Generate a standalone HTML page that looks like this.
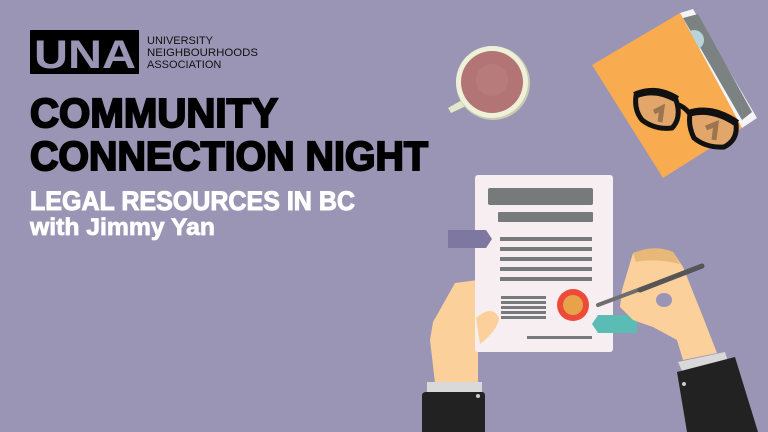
<!DOCTYPE html>
<html><head><meta charset="utf-8"><style>
html,body{margin:0;padding:0;width:768px;height:432px;overflow:hidden;background:#9a95b5}
svg{display:block}
</style></head><body>
<svg width="768" height="432" viewBox="0 0 768 432" xmlns="http://www.w3.org/2000/svg">
<rect width="768" height="432" fill="#9a95b5"/>
<rect x="30" y="30" width="109" height="44" fill="#000"/>
<text x="34" y="68" font-family="Liberation Sans, sans-serif" font-weight="bold" font-size="40" fill="#9a95b5" textLength="102" lengthAdjust="spacingAndGlyphs">UNA</text>
<g font-family="Liberation Sans, sans-serif" font-size="11" fill="#111">
<text x="147" y="44">UNIVERSITY</text>
<text x="147" y="56" textLength="111" lengthAdjust="spacingAndGlyphs">NEIGHBOURHOODS</text>
<text x="147" y="68">ASSOCIATION</text>
</g>
<g font-family="Liberation Sans, sans-serif" font-weight="bold">
<text x="30" y="127" font-size="41" fill="#000" textLength="248" lengthAdjust="spacingAndGlyphs" stroke="#000" stroke-width="2">COMMUNITY</text>
<text x="30" y="170" font-size="41" fill="#000" textLength="398" lengthAdjust="spacingAndGlyphs" stroke="#000" stroke-width="2">CONNECTION NIGHT</text>
<text x="30" y="210" font-size="27" fill="#fff" textLength="325" lengthAdjust="spacingAndGlyphs" stroke="#fff" stroke-width="1">LEGAL RESOURCES IN BC</text>
<text x="30" y="235" font-size="24" fill="#fff" textLength="185" lengthAdjust="spacingAndGlyphs" stroke="#fff" stroke-width="0.8">with Jimmy Yan</text>
</g>
<path d="M462,100 L448,108 L451,113 L466,106 Z" fill="#e3e8c8"/>
<circle cx="493" cy="83" r="37" fill="#c9ccb0"/>
<circle cx="492" cy="82" r="36" fill="#eef0d8"/>
<circle cx="492" cy="82" r="31" fill="#b27474"/>
<circle cx="492" cy="80" r="16" fill="#bd8080" opacity="0.6"/>
<polygon points="680,13 693,9 757,118 742,128" fill="#f4f4f4"/>
<polygon points="683,18 698,14 752,112 742,120" fill="#7c8282"/>
<circle cx="694" cy="40" r="10" fill="#b9d3db"/>
<polygon points="592,65 680,13 742,128 663,178" fill="#f9ab4f"/>
<g>
<path d="M636,96 Q655,88 676,100 Q682,118 672,128 Q655,130 642,120 Q634,110 636,96 Z" fill="#e3a66a" stroke="#111" stroke-width="5"/>
<path d="M690,114 Q712,108 736,124 Q738,140 724,147 Q706,148 694,138 Q688,126 690,114 Z" fill="#e3a66a" stroke="#111" stroke-width="5"/>
<path d="M676,104 Q684,106 690,114" stroke="#111" stroke-width="5" fill="none"/>
<path d="M634,94 Q656,84 678,98 M688,112 Q712,104 738,122" stroke="#111" stroke-width="4" fill="none"/>
<path d="M654,112 L662,108 L660,122" stroke="#9b7550" stroke-width="5" fill="none"/>
<path d="M706,128 L716,124 L714,140" stroke="#9b7550" stroke-width="5" fill="none"/>
</g>
<polygon points="433,322 455,283 478,280 478,383 435,383 430,340" fill="#fcd09a"/>
<rect x="475" y="175" width="138" height="177" rx="3" fill="#f6eef0"/>
<g fill="#767a7a">
<rect x="488" y="188" width="105" height="17" rx="2"/>
<rect x="498" y="212" width="95" height="10" rx="1"/>
<rect x="500" y="237" width="92" height="4"/>
<rect x="500" y="247" width="92" height="4"/>
<rect x="500" y="257" width="92" height="4"/>
<rect x="500" y="267" width="92" height="4"/>
<rect x="500" y="277" width="92" height="4"/>
<rect x="501" y="296" width="45" height="3"/>
<rect x="501" y="301" width="45" height="3"/>
<rect x="501" y="306" width="45" height="3"/>
<rect x="501" y="311" width="45" height="3"/>
<rect x="501" y="316" width="45" height="3"/>
<rect x="527" y="336" width="65" height="3"/>
</g>
<circle cx="573" cy="305" r="16" fill="#ee4a3a"/>
<circle cx="573" cy="305" r="10" fill="#e8a24a"/>
<polygon points="448,230 486,230 492,239 486,248 448,248" fill="#7e78a0"/>
<polygon points="598,315 637,315 637,333 598,333 592,324" fill="#5bbcb5"/>
<path d="M476,318 Q492,304 499,318 Q498,330 480,344 Z" fill="#fcd09a"/>
<rect x="427" y="382" width="55" height="10" fill="#d9d9d9"/>
<path d="M422,396 Q422,392 426,392 L482,392 Q485,392 485,396 L485,432 L422,432 Z" fill="#222"/>
<circle cx="478" cy="396" r="2" fill="#ccc"/>
<polygon points="633,253 673,252 683,267 703,317 717,353 683,360 677,340 653,327 633,320 620,307 622,290" fill="#fcd09a"/>
<path d="M633,253 Q655,244 673,252 L680,264 Q655,258 636,262 Z" fill="#e8b878"/>
<ellipse cx="664" cy="300" rx="8" ry="7" fill="#9a95b5"/>
<line x1="598" y1="305" x2="702" y2="266" stroke="#6e6e6e" stroke-width="4" stroke-linecap="round"/>
<line x1="640" y1="290" x2="702" y2="266" stroke="#555" stroke-width="5" stroke-linecap="round"/>
<polygon points="678,362 725,352 728,362 682,371" fill="#d9d9d9"/>
<polygon points="677,372 735,357 758,432 687,432" fill="#222"/>
<circle cx="684" cy="384" r="2" fill="#ccc"/>
</svg>
</body></html>
